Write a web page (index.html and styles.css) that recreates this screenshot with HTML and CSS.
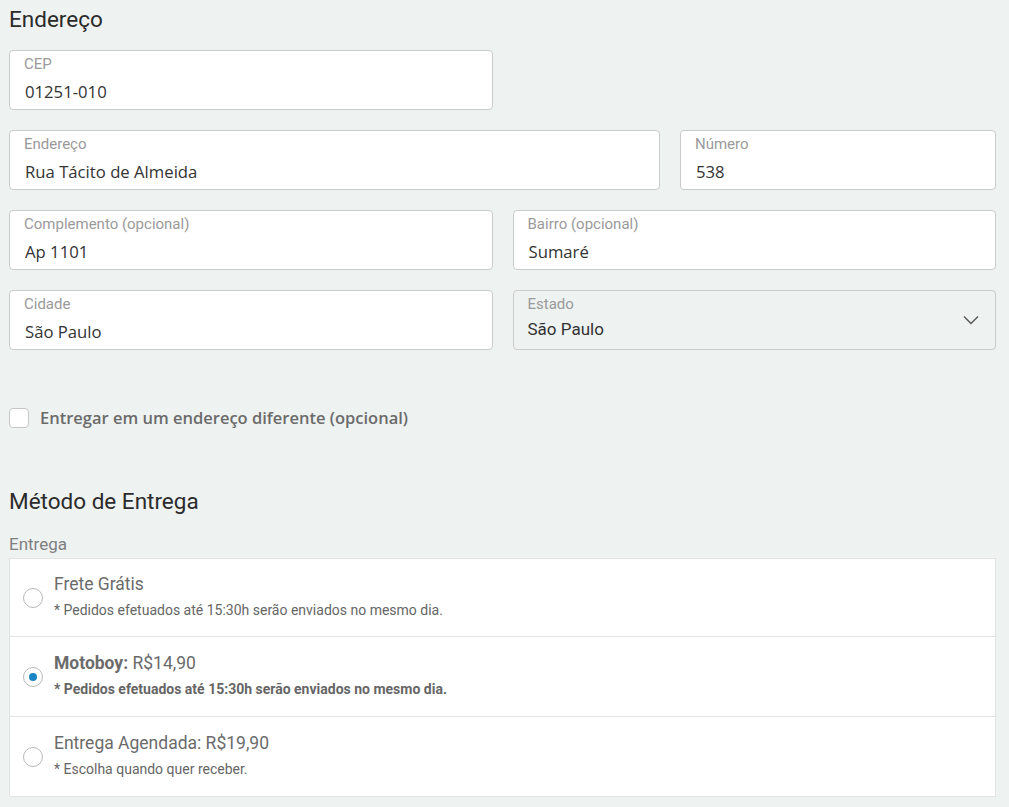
FILE: index.html
```html
<!DOCTYPE html>
<html lang="pt-BR">
<head>
    <meta charset="UTF-8">
    <meta name="viewport" content="width=device-width, initial-scale=1.0">
    <title>Checkout - Endereço</title>
    <link rel="stylesheet" href="styles.css">
</head>
<body>
    <div class="secao">
        <h2 class="titulo">Endereço</h2>

        <div class="linha linha-meia">
            <label class="campo">
                <span class="campo-label">CEP</span>
                <input type="text" value="01251-010">
            </label>
        </div>

        <div class="linha linha-endereco">
            <label class="campo">
                <span class="campo-label">Endereço</span>
                <input type="text" value="Rua Tácito de Almeida">
            </label>
            <label class="campo">
                <span class="campo-label">Número</span>
                <input type="text" value="538">
            </label>
        </div>

        <div class="linha">
            <label class="campo">
                <span class="campo-label">Complemento (opcional)</span>
                <input type="text" value="Ap 1101">
            </label>
            <label class="campo">
                <span class="campo-label">Bairro (opcional)</span>
                <input type="text" value="Sumaré">
            </label>
        </div>

        <div class="linha">
            <label class="campo">
                <span class="campo-label">Cidade</span>
                <input type="text" value="São Paulo">
            </label>
            <label class="campo campo-select">
                <span class="campo-label">Estado</span>
                <span class="select-valor">São Paulo</span>
                <svg class="seta" width="16" height="10" viewBox="0 0 16 10">
                    <path d="M1 1.5 L8 8.5 L15 1.5" fill="none" stroke="#555" stroke-width="1.4"/>
                </svg>
            </label>
        </div>

        <label class="check">
            <span class="check-box"></span>
            <span class="check-texto">Entregar em um endereço diferente (opcional)</span>
        </label>
    </div>

    <div class="secao secao-entrega">
        <h2 class="titulo">Método de Entrega</h2>
        <p class="sub-label">Entrega</p>

        <div class="opcoes">
            <div class="opcao">
                <span class="radio"></span>
                <div class="opcao-info">
                    <p class="opcao-titulo">Frete Grátis</p>
                    <p class="opcao-desc">* Pedidos efetuados até 15:30h serão enviados no mesmo dia.</p>
                </div>
            </div>
            <div class="opcao">
                <span class="radio radio-ativo"></span>
                <div class="opcao-info">
                    <p class="opcao-titulo"><strong>Motoboy:</strong> R$14,90</p>
                    <p class="opcao-desc"><strong>* Pedidos efetuados até 15:30h serão enviados no mesmo dia.</strong></p>
                </div>
            </div>
            <div class="opcao">
                <span class="radio"></span>
                <div class="opcao-info">
                    <p class="opcao-titulo">Entrega Agendada: R$19,90</p>
                    <p class="opcao-desc">* Escolha quando quer receber.</p>
                </div>
            </div>
        </div>
    </div>
</body>
</html>
```

FILE: styles.css
```css
*{
    margin: 0;
    padding: 0;
    box-sizing: border-box;
}
body{
    background-color: #eef2f1;
    font-family: Roboto, "Liberation Sans", sans-serif;
    color: #333;
    padding: 0 13px 0 9px;
}
.titulo{
    font-weight: 400;
    font-size: 22.5px;
    color: #2b2b2b;
    height: 50px;
    padding-top: 6px;
}
/* Campos do endereço */
.linha{
    display: grid;
    grid-template-columns: 1fr 1fr;
    gap: 20px;
    margin-bottom: 20px;
}
.linha-meia .campo{
    grid-column: 1;
}
.linha-endereco{
    grid-template-columns: 651fr 316fr;
}
.campo{
    display: flex;
    flex-direction: column;
    height: 60px;
    background-color: #fff;
    border: 1px solid #c9cccb;
    border-radius: 4px;
    padding: 5px 14px 0 14px;
    position: relative;
}
.campo-label{
    font-size: 15px;
    color: #9a9a9a;
    line-height: 16px;
}
.campo input{
    border: none;
    outline: none;
    background: transparent;
    font-family: "Open Sans", "Liberation Sans", sans-serif;
    font-size: 16.7px;
    color: #333;
    padding: 0 1px;
    margin-top: 7px;
    height: 24px;
}
.campo-select{
    background-color: transparent;
}
.select-valor{
    font-size: 17px;
    color: #333;
    margin-top: 6px;
    line-height: 22px;
}
.seta{
    position: absolute;
    right: 16px;
    top: 24px;
}
/* Checkbox */
.check{
    display: flex;
    align-items: center;
    gap: 11px;
    margin-top: 56px;
}
.check-box{
    width: 20px;
    height: 20px;
    background: #fff;
    border: 1px solid #c6c6c6;
    border-radius: 4px;
}
.check-texto{
    font-family: "Open Sans", "Liberation Sans", sans-serif;
    font-weight: 600;
    font-size: 16.5px;
    color: #6b6b6b;
}
/* Metodo de entrega */
.secao-entrega{
    margin-top: 53px;
}
.secao-entrega .titulo{
    height: 52px;
}
.sub-label{
    font-size: 17px;
    color: #808080;
    height: 24px;
}
.opcoes{
    background-color: #fff;
    border: 1px solid #e2e4e3;
}
.opcao{
    display: flex;
    align-items: center;
    gap: 11px;
    padding: 0 13px 4px 13px;
    height: 79px;
    border-bottom: 1px solid #e2e4e3;
}
.opcao:first-child{
    height: 78px;
}
.opcao:nth-child(2){
    height: 80px;
}
.opcao:last-child{
    border-bottom: none;
}
.radio{
    width: 20px;
    height: 20px;
    border-radius: 50%;
    border: 1px solid #b9b9b9;
    margin-top: 4px;
    flex-shrink: 0;
    display: flex;
    align-items: center;
    justify-content: center;
}
.radio-ativo::after{
    content: '';
    width: 8px;
    height: 8px;
    border-radius: 50%;
    background-color: #1b85c4;
}
.opcao-titulo{
    font-size: 17.5px;
    color: #6b6b6b;
    line-height: 22px;
}
.opcao-titulo strong{
    font-weight: 700;
}
.opcao-desc{
    font-size: 14px;
    color: #666;
    margin-top: 7px;
}
.opcao-desc strong{
    font-weight: 700;
}
```
